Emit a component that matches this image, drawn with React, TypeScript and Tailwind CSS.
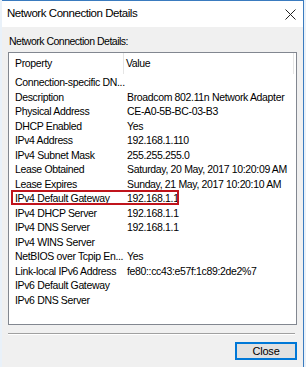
import React from 'react';

type Row = { name: string; value: string };

const rows: Row[] = [
    { name: 'Connection-specific DN...', value: '' },
    { name: 'Description', value: 'Broadcom 802.11n Network Adapter' },
    { name: 'Physical Address', value: 'CE-A0-5B-BC-03-B3' },
    { name: 'DHCP Enabled', value: 'Yes' },
    { name: 'IPv4 Address', value: '192.168.1.110' },
    { name: 'IPv4 Subnet Mask', value: '255.255.255.0' },
    { name: 'Lease Obtained', value: 'Saturday, 20 May, 2017 10:20:09 AM' },
    { name: 'Lease Expires', value: 'Sunday, 21 May, 2017 10:20:10 AM' },
    { name: 'IPv4 Default Gateway', value: '192.168.1.1' },
    { name: 'IPv4 DHCP Server', value: '192.168.1.1' },
    { name: 'IPv4 DNS Server', value: '192.168.1.1' },
    { name: 'IPv4 WINS Server', value: '' },
    { name: 'NetBIOS over Tcpip En...', value: 'Yes' },
    { name: 'Link-local IPv6 Address', value: 'fe80::cc43:e57f:1c89:2de2%7' },
    { name: 'IPv6 Default Gateway', value: '' },
    { name: 'IPv6 DNS Server', value: '' },
];

const font = { fontFamily: '"Liberation Sans", Arial, sans-serif' };

const App: React.FC = () => {
    return (
        <div className="w-[306px] h-[367px] bg-[#e9f1f9] flex" style={font}>
            <div className="ml-[2px] w-[302px] h-full flex flex-col border-t border-r border-[#3a7bbf] bg-[#f0f0f0] text-[#000]">
                {/* title bar */}
                <div className="h-[26px] bg-white flex items-center justify-between pl-[5px] pr-[6px]">
                    <span className="text-[11.5px] tracking-[-0.45px]">Network Connection Details</span>
                    <svg width="11" height="11" viewBox="0 0 11 11" className="mr-[1px]">
                        <path d="M0.5 0.5 L10.5 10.5 M10.5 0.5 L0.5 10.5" stroke="#222" strokeWidth="1" />
                    </svg>
                </div>

                <div className="flex-1 flex flex-col px-[6px] pt-[9px] text-[10.5px] leading-none tracking-[-0.35px]">
                    <div className="pl-[1px] h-[14px] tracking-[-0.5px]">Network Connection Details:</div>

                    {/* list view */}
                    <div className="mt-[2px] h-[273px] w-[289px] border border-[#828790] bg-white relative">
                        <div className="flex h-[21px] items-center">
                            <div className="w-[115px] h-full flex items-center pl-[6px] border-r border-[#e5e5e5]">Property</div>
                            <div className="flex-1 h-full flex items-center pl-[2px] border-r border-[#e5e5e5] mr-[2px]">Value</div>
                        </div>
                        <div className="pt-[1px]">
                            {rows.map((r) => (
                                <div key={r.name} className="flex h-[14.5px] items-center whitespace-nowrap">
                                    <div className="w-[116px] pl-[6px]">{r.name}</div>
                                    <div className="pl-[2px]">{r.value}</div>
                                </div>
                            ))}
                        </div>
                        {/* highlight marker */}
                        <div className="absolute left-[2px] top-[137px] w-[168px] h-[15px] border-2 border-[#c0141c]" />
                    </div>

                    {/* separator */}
                    <div className="mt-[8px] w-[287px] border-t border-[#a0a0a0] border-b border-b-white" />

                    <div className="flex justify-end mt-[7px]">
                        <button className="w-[62px] h-[18px] border-2 border-[#0078d7] bg-[#e1e1e1] text-[11px] tracking-[-0.2px] flex items-center justify-center">
                            Close
                        </button>
                    </div>
                </div>
            </div>
        </div>
    );
};

export default App;
